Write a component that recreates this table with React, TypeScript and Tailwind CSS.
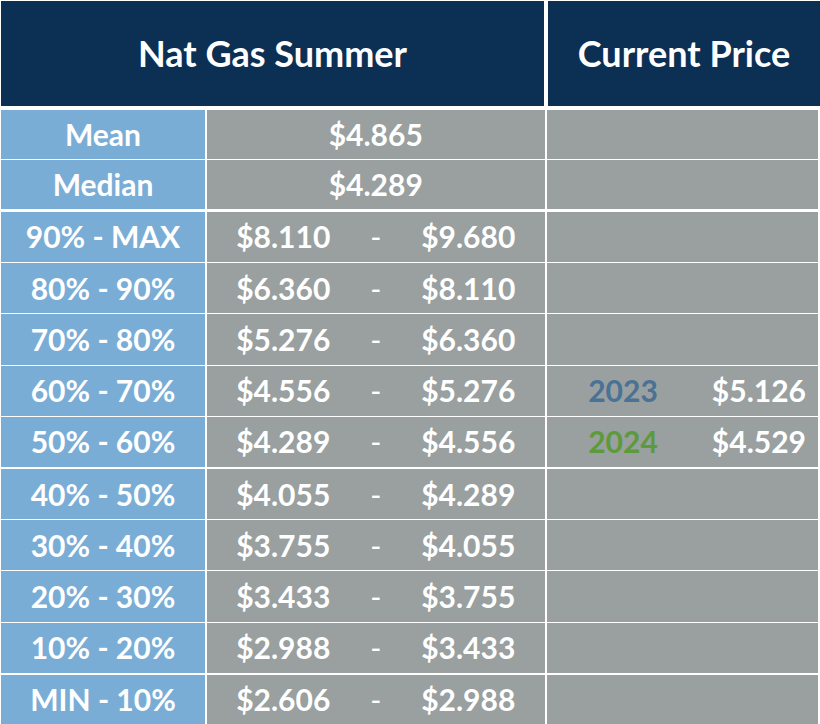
import React from 'react';

const ranges = [
  { label: '90% - MAX', lo: '$8.110', hi: '$9.680' },
  { label: '80% - 90%', lo: '$6.360', hi: '$8.110' },
  { label: '70% - 80%', lo: '$5.276', hi: '$6.360' },
  { label: '60% - 70%', lo: '$4.556', hi: '$5.276', year: '2023', price: '$5.126', color: 'text-[#4a7196]' },
  { label: '50% - 60%', lo: '$4.289', hi: '$4.556', year: '2024', price: '$4.529', color: 'text-[#5c9a3c]' },
  { label: '40% - 50%', lo: '$4.055', hi: '$4.289' },
  { label: '30% - 40%', lo: '$3.755', hi: '$4.055' },
  { label: '20% - 30%', lo: '$3.433', hi: '$3.755' },
  { label: '10% - 20%', lo: '$2.988', hi: '$3.433' },
  { label: 'MIN - 10%', lo: '$2.606', hi: '$2.988' },
];

// thicker rule below these rows
const thick = new Set([4, 8]);

function StatRow({ label, value }: { label: string; value: string }) {
  return (
    <div className="flex h-[49px]">
      <div className="flex w-[204px] items-center justify-center bg-[#7aadd6]">{label}</div>
      <div className="ml-[1.5px] flex w-[338.5px] items-center justify-center bg-[#99a09f]">{value}</div>
      <div className="ml-[2px] w-[271px] bg-[#99a09f]" />
    </div>
  );
}

export default function App() {
  return (
    <div
      className="h-[724px] w-[820px] overflow-hidden bg-white pl-[1px] pt-[1px] text-[30px] font-bold text-white"
      style={{ fontFamily: 'Lato, "Open Sans", sans-serif' }}
    >
      <div className="flex h-[104.5px] text-[36px]">
        <div className="flex w-[543px] items-center justify-center bg-[#0b3054]">Nat Gas Summer</div>
        <div className="ml-[4px] flex flex-1 items-center justify-center bg-[#0b3054]">Current Price</div>
      </div>

      <div className="mt-[4.5px] flex flex-col gap-[1.3px]">
        <StatRow label="Mean" value="$4.865" />
        <StatRow label="Median" value="$4.289" />
      </div>

      <div className="mt-[2.6px] flex h-[513px] flex-col">
        {ranges.map((r, i) => (
          <div
            key={r.label}
            className={`flex flex-1 ${i < ranges.length - 1 ? (thick.has(i) ? 'border-b-[2px]' : 'border-b-[1.5px]') : ''} border-white`}
          >
            <div className="flex w-[204px] items-center justify-center bg-[#7aadd6]">{r.label}</div>
            <div className="ml-[1.5px] flex w-[338.5px] items-center justify-center bg-[#99a09f]">
              <span className="w-[120px] text-center">{r.lo}</span>
              <span className="w-[65px] text-center font-normal">-</span>
              <span className="w-[120px] text-center">{r.hi}</span>
            </div>
            <div className="ml-[2px] flex w-[271px] items-center bg-[#99a09f]">
              {r.year && (
                <>
                  <span className={`ml-[16px] w-[120px] text-center ${r.color}`}>{r.year}</span>
                  <span className="ml-auto pr-[12px]">{r.price}</span>
                </>
              )}
            </div>
          </div>
        ))}
      </div>
    </div>
  );
}
